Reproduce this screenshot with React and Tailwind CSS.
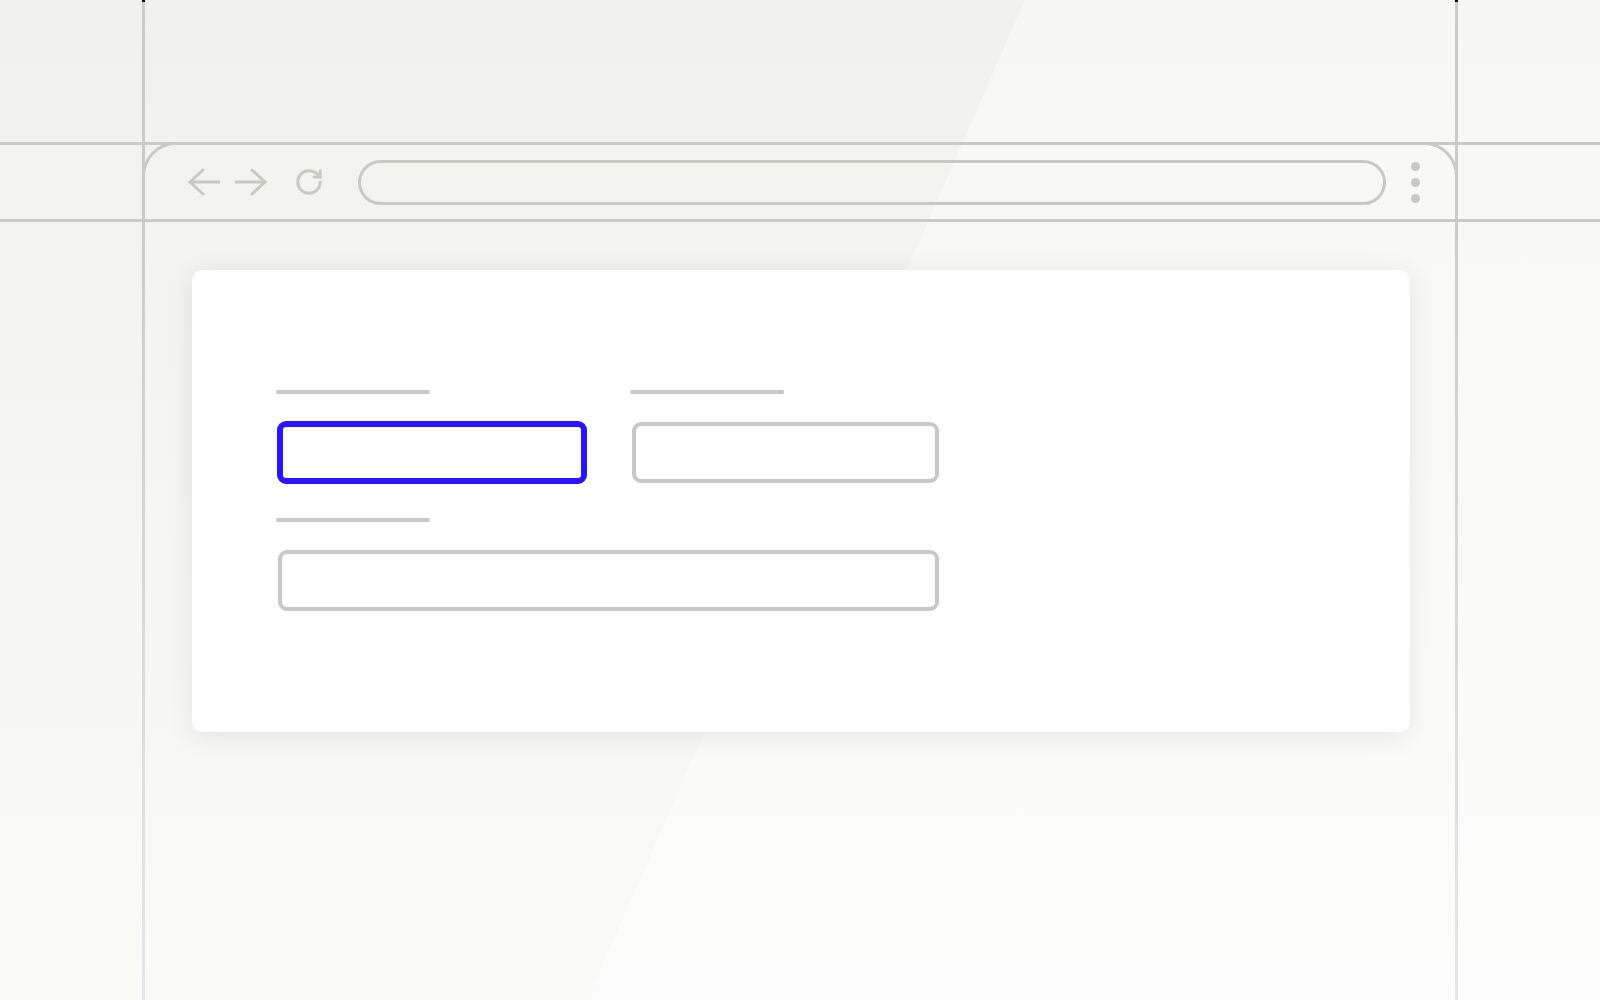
import { RotateCw } from "lucide-react";

const LINE = "bg-[#cdcaca]";

function VLine({ cap = false, fade = false }) {
  return (
    <div
      className={`w-[3px] shrink-0 ${
        fade ? "bg-gradient-to-b from-[#cdcaca] to-[#e6e7ea]" : LINE
      } ${cap ? "border-t-2 border-black" : ""}`}
    />
  );
}

function BackArrow() {
  return (
    <svg width="32" height="28" viewBox="0 0 32 28" fill="none" stroke="#c8c8c8" strokeWidth="3" strokeLinecap="round" strokeLinejoin="round">
      <path d="M2 14H31" />
      <path d="M15 2 2 14l13 12" />
    </svg>
  );
}

function ForwardArrow() {
  return (
    <svg width="32" height="28" viewBox="0 0 32 28" fill="none" stroke="#c8c8c8" strokeWidth="3" strokeLinecap="round" strokeLinejoin="round">
      <path d="M1 14H30" />
      <path d="M17 2l13 12-13 12" />
    </svg>
  );
}

function Toolbar() {
  return (
    <div className="-mx-[3px] -mt-[3px] h-[77px] rounded-t-[34px] border-x-[3px] border-t-[3px] border-[#c9c9c9]">
      <div className="flex h-[74px] items-center pl-[43px] pr-[35px]">
        <BackArrow />
        <div className="ml-[15px]">
          <ForwardArrow />
        </div>
        <RotateCw className="ml-[27px]" size={30} strokeWidth={2.4} color="#c8c8c8" />
        <div className="ml-[34px] h-[45px] flex-1 rounded-full border-[3px] border-[#c8c8c8]" />
        <div className="ml-[25px] flex flex-col gap-[7px]">
          <span className="h-[9px] w-[9px] rounded-full bg-[#c8c8c8]" />
          <span className="h-[9px] w-[9px] rounded-full bg-[#c8c8c8]" />
          <span className="h-[9px] w-[9px] rounded-full bg-[#c8c8c8]" />
        </div>
      </div>
    </div>
  );
}

function Label() {
  return <div className="h-1 w-[154px] rounded-full bg-[#c8c8c8]" />;
}

function Form() {
  return (
    <div className="w-[664px]">
      <div className="grid grid-cols-2 gap-x-[44px]">
        <div>
          <Label />
          <div className="ml-px mt-[27px] h-[63px] w-[310px] rounded-[9px] border-[6px] border-[#2814ff] bg-white" />
        </div>
        <div>
          <Label />
          <div className="ml-[2px] mt-[28px] h-[61px] w-[307px] rounded-[9px] border-4 border-[#c8c8c8] bg-white" />
        </div>
      </div>
      <div className="mt-[34px]">
        <Label />
        <div className="ml-[2px] mt-[28px] h-[61px] w-[661px] rounded-[9px] border-4 border-[#c8c8c8] bg-white" />
      </div>
    </div>
  );
}

export default function App() {
  return (
    <div className="relative h-[1000px] w-[1600px] overflow-hidden bg-gradient-to-b from-[#f1f1ed] to-[#fafaf9]">
      <div className="pointer-events-none absolute inset-0 bg-white/45 [clip-path:polygon(1025px_0,1600px_0,1600px_1000px,587px_1000px)]" />
      <div className="relative flex h-full flex-col">
        <div className="flex h-[142px] shrink-0">
          <div className="w-[142px] shrink-0" />
          <VLine cap />
          <div className="w-[1310px] shrink-0" />
          <VLine cap />
          <div className="flex-1" />
        </div>
        <div className="flex h-[80px] shrink-0 border-y-[3px] border-[#c9c9c9]">
          <div className="w-[142px] shrink-0" />
          <VLine />
          <div className="w-[1310px] shrink-0">
            <Toolbar />
          </div>
          <VLine />
          <div className="flex-1" />
        </div>
        <div className="flex flex-1">
          <div className="w-[142px] shrink-0" />
          <VLine fade />
          <div className="w-[1310px] shrink-0 pl-[47px] pr-[45px] pt-[48px]">
            <div className="h-[462px] rounded-[10px] bg-white pl-[84px] pt-[120px] shadow-[0_4px_28px_rgba(0,0,0,0.09)]">
              <Form />
            </div>
          </div>
          <VLine fade />
          <div className="flex-1" />
        </div>
      </div>
    </div>
  );
}
